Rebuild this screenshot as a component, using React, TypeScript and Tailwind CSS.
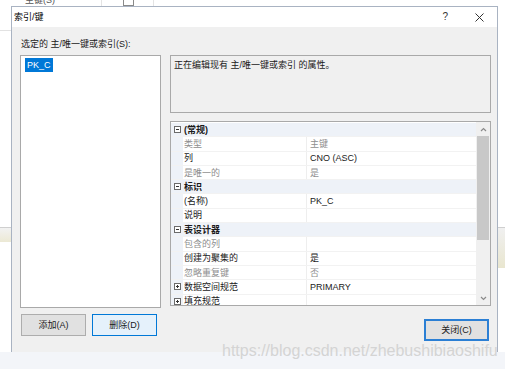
import { useState } from 'react'

type Row = {
  name: string
  value?: string
  cat?: boolean
  dim?: boolean
  plus?: boolean
}

const rows: Row[] = [
  { name: '(常规)', cat: true },
  { name: '类型', value: '主键', dim: true },
  { name: '列', value: 'CNO (ASC)' },
  { name: '是唯一的', value: '是', dim: true },
  { name: '标识', cat: true },
  { name: '(名称)', value: 'PK_C' },
  { name: '说明', value: '' },
  { name: '表设计器', cat: true },
  { name: '包含的列', value: '', dim: true },
  { name: '创建为聚集的', value: '是' },
  { name: '忽略重复键', value: '否', dim: true },
  { name: '数据空间规范', value: 'PRIMARY', plus: true },
  { name: '填充规范', value: '', plus: true },
]

function ToggleBox({ plus }: { plus?: boolean }) {
  return (
    <svg width="7" height="7" viewBox="0 0 7 7" className="shrink-0">
      <rect x="0.5" y="0.5" width="6" height="6" fill="white" stroke="#6b6b6b" strokeWidth="1" />
      <line x1="2" y1="3.5" x2="5" y2="3.5" stroke="#333" strokeWidth="1" />
      {plus && <line x1="3.5" y1="2" x2="3.5" y2="5" stroke="#333" strokeWidth="1" />}
    </svg>
  )
}

function Chevron({ down }: { down?: boolean }) {
  return (
    <svg width="7" height="5" viewBox="0 0 7 5">
      <polyline
        points={down ? '1,1 3.5,3.5 6,1' : '1,4 3.5,1.5 6,4'}
        fill="none"
        stroke="#8a8a8a"
        strokeWidth="1.2"
      />
    </svg>
  )
}

function PropertyGrid() {
  return (
    <div className="flex h-[185px] border border-[#a9a9a9] bg-white">
      <div className="w-[305px] pt-[1px] overflow-hidden">
        {rows.map((r) =>
          r.cat ? (
            <div key={r.name} className="flex h-[14.3px] items-center bg-[#eef2f8] border-b border-[#f2f2f2]">
              <div className="w-[12px] flex justify-center pl-[1px]">
                <ToggleBox />
              </div>
              <span className="font-bold text-[#1a1a1a] pl-[1px]">{r.name}</span>
            </div>
          ) : (
            <div key={r.name} className="flex h-[14.3px] items-center border-b border-[#f2f2f2]">
              <div className="w-[12px] h-full flex items-center justify-center pl-[1px] bg-[#eef2f8]">
                {r.plus && <ToggleBox plus />}
              </div>
              <span
                className={`w-[124px] h-full flex items-center pl-[1px] border-r border-[#eeeeee] ${
                  r.dim ? 'text-[#8e8e8e]' : 'text-[#1a1a1a]'
                }`}
              >
                {r.name}
              </span>
              <span className={`pl-[3px] ${r.dim ? 'text-[#8e8e8e]' : 'text-[#1a1a1a]'}`}>{r.value}</span>
            </div>
          )
        )}
      </div>
      <div className="w-[14px] flex flex-col bg-[#f0f0f0]">
        <div className="h-[14px] flex items-center justify-center">
          <Chevron />
        </div>
        <div className="h-[104px] mx-[1px] bg-[#c8c8c8]" />
        <div className="flex-1" />
        <div className="h-[14px] flex items-center justify-center">
          <Chevron down />
        </div>
      </div>
    </div>
  )
}

export default function App() {
  const [selected] = useState('PK_C')

  return (
    <div className='relative w-[505px] h-[369px] overflow-hidden bg-white flex flex-col text-[9px] leading-[12px] text-[#1a1a1a] font-["Liberation_Sans","Noto_Sans_CJK_SC",sans-serif]'>
      {/* strip of the window behind the dialog */}
      <div className="h-[6px] flex items-end overflow-hidden">
        <span className="ml-[25px] h-[12px] shrink-0 text-[#555]">主键(S)</span>
        <div className="ml-[46px] w-px h-full bg-[#e4e4e4]" />
        <div className="ml-[21px] w-[11px] h-[6px] border-x border-b border-[#8a8a8a]" />
        <div className="ml-[19px] w-px h-full bg-[#e4e4e4]" />
      </div>

      <div className="flex h-[346px]">
        <div className="w-[11px] flex flex-col">
          <div className="h-[24px]" />
          <div className="h-px bg-[#e2e2e2]" />
          <div className="h-[196px]" />
          <div className="h-px bg-[#cfcfcf]" />
          <div className="h-[14px] bg-gradient-to-b from-[#f2f2f2] to-[#ece9d4]" />
          <div className="flex-1" />
        </div>

        {/* dialog */}
        <div className="w-[487px] flex flex-col border border-b-0 border-[#a9b3c2]">
          <div className="h-[20px] bg-white flex items-center pl-[2px] pr-[13px]">
            <span className="text-black">索引/键</span>
            <span className="ml-auto text-[#333] text-[10px]">?</span>
            <svg width="9" height="9" viewBox="0 0 9 9" className="ml-[27px]">
              <line x1="0.5" y1="0.5" x2="8.5" y2="8.5" stroke="#333" strokeWidth="1" />
              <line x1="8.5" y1="0.5" x2="0.5" y2="8.5" stroke="#333" strokeWidth="1" />
            </svg>
          </div>

          <div className="flex-1 bg-[#f0f0f0] pt-[11px] pl-[8px] pr-[6px] flex flex-col">
            <div className="h-[12px] pl-[1px] mb-[5px]">选定的 主/唯一键或索引(S):</div>

            <div className="flex h-[253px] gap-[9px]">
              <div className="w-[141px] border border-[#a9a9a9] bg-white pt-[2px] pl-[4px]">
                <span className="inline-block bg-[#0078d7] text-white px-[2px] h-[14px] leading-[14px]">{selected}</span>
              </div>
              <div className="w-[321px] flex flex-col gap-[8px]">
                <div className="h-[58px] border border-[#a9a9a9] bg-[#f0f0f0] pt-[3px] pl-[3px]">
                  正在编辑现有 主/唯一键或索引 的属性。
                </div>
                <PropertyGrid />
              </div>
            </div>

            <div className="flex items-start mt-[6px] pl-[1px] pr-[2px]">
              <button className="w-[65px] h-[22px] bg-[#e1e1e1] border border-[#adadad] text-[#1a1a1a]">添加(A)</button>
              <button className="ml-[6px] w-[65px] h-[22px] bg-[#e5f1fb] border border-[#0078d7] text-[#1a1a1a]">删除(D)</button>
              <button className="ml-auto mt-[5px] w-[65px] h-[22px] bg-[#e1e1e1] border-2 border-[#2b7fd4] text-[#1a1a1a]">关闭(C)</button>
            </div>
          </div>
        </div>

        <div className="flex-1 flex flex-col">
          <div className="h-[221px]" />
          <div className="h-px bg-[#cfcfcf]" />
          <div className="h-[40px] bg-gradient-to-b from-[#f0f0f0] to-[#e9e6cf]" />
          <div className="flex-1" />
        </div>
      </div>

      <div className="flex-1 bg-[#f3f5f9]" />

      {/* watermark over the bottom edge */}
      <div className='absolute left-[222px] top-[343px] text-[16px] leading-[16px] text-[#d4d4d4] font-["Liberation_Sans",sans-serif] whitespace-nowrap'>
        https://blog.csdn.net/zhebushibiaoshifu
      </div>
    </div>
  )
}
